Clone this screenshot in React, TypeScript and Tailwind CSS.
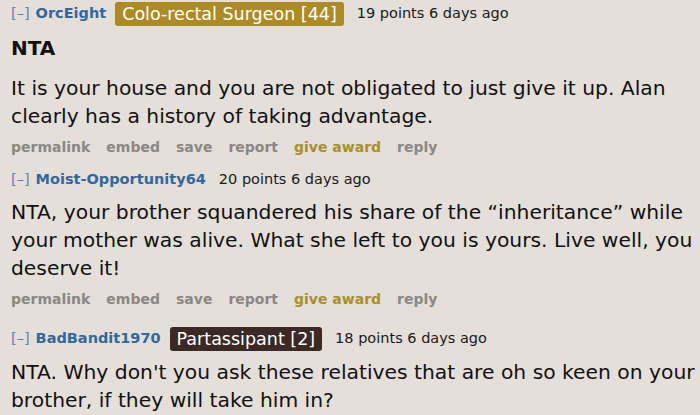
import React from 'react';

type Comment = {
  user: string;
  flair?: { text: string; bg: string };
  points: string;
  title?: string;
  body: string;
  actions?: boolean;
  top: string;
  bodyTop: string;
};

const comments: Comment[] = [
  {
    user: 'OrcEight',
    flair: { text: 'Colo-rectal Surgeon [44]', bg: 'bg-[#ad8b24]' },
    points: '19 points 6 days ago',
    title: 'NTA',
    body: 'It is your house and you are not obligated to just give it up. Alan clearly has a history of taking advantage.',
    actions: true,
    top: 'pt-[2px]',
    bodyTop: 'mt-[12px]',
  },
  {
    user: 'Moist-Opportunity64',
    points: '20 points 6 days ago',
    body: 'NTA, your brother squandered his share of the \u201cinheritance\u201d while your mother was alive. What she left to you is yours. Live well, you deserve it!',
    actions: true,
    top: 'pt-[6px]',
    bodyTop: 'mt-[6px]',
  },
  {
    user: 'BadBandit1970',
    flair: { text: 'Partassipant [2]', bg: 'bg-[#3b2a23]' },
    points: '18 points 6 days ago',
    body: "NTA. Why don't you ask these relatives that are oh so keen on your brother, if they will take him in?",
    top: 'pt-[13px]',
    bodyTop: 'mt-[7px]',
  },
];

function Actions() {
  return (
    <div className="flex gap-[16px] text-[14px] font-bold text-[#8a8784] h-[32px] pt-[2px] items-center">
      <span>permalink</span>
      <span>embed</span>
      <span>save</span>
      <span>report</span>
      <span className="text-[#a8902a]">give award</span>
      <span>reply</span>
    </div>
  );
}

export default function App() {
  return (
    <div
      className="w-[700px] h-[415px] overflow-hidden bg-[#e4dfd8] pl-[11px] pr-[1px] text-[#111]"
      style={{ fontFamily: '"DejaVu Sans", Verdana, sans-serif' }}
    >
      {comments.map((c) => (
        <div key={c.user} className={c.top}>
          <div className="flex items-center h-[24px] text-[14.5px]">
            <span className="text-[#5a86b4]">[–]</span>
            <span className="ml-[6px] font-bold text-[#33689c]">{c.user}</span>
            {c.flair && (
              <span
                className={`ml-[9px] ${c.flair.bg} text-white text-[17.5px] rounded-[3px] px-[7px] h-[24px] flex items-center`}
              >
                {c.flair.text}
              </span>
            )}
            <span className="ml-[13px] text-[14.5px] text-[#1a1a1a]">{c.points}</span>
          </div>
          {c.title && <div className="font-bold text-[20px] leading-[28px] mt-[8px]">{c.title}</div>}
          <p className={`text-[20.3px] leading-[28px] ${c.bodyTop}`}>{c.body}</p>
          {c.actions && <Actions />}
        </div>
      ))}
    </div>
  );
}
